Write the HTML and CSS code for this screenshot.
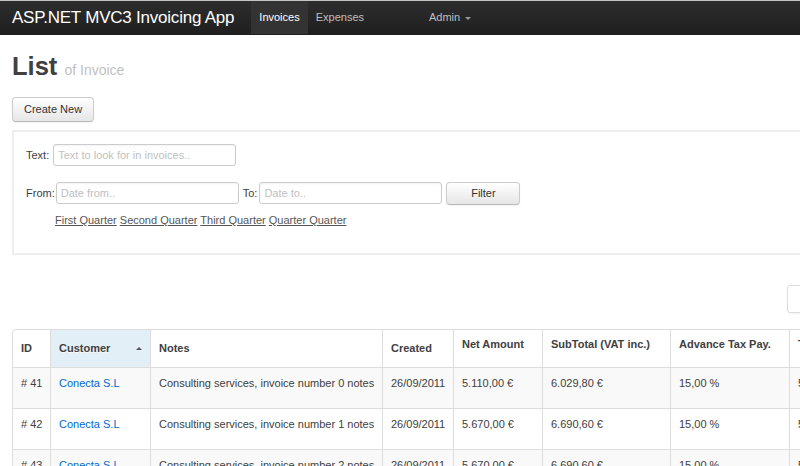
FILE: index.html
```html
<!DOCTYPE html>
<html lang="en">
<head>
<meta charset="utf-8">
<title>List of Invoice</title>
<link rel="stylesheet" href="styles.css">
</head>
<body>
<header class="topbar">
  <a class="brand" href="#">ASP.NET MVC3 Invoicing App</a>
  <ul class="nav">
    <li class="active"><a href="#">Invoices</a></li>
    <li><a href="#">Expenses</a></li>
  </ul>
  <ul class="nav secondary">
    <li><a href="#">Admin <span class="caret"></span></a></li>
  </ul>
</header>
<main class="container">
  <h1>List <small>of Invoice</small></h1>
  <div class="actions"><a class="btn" href="#">Create New</a></div>
  <form class="filter">
    <div class="field-row"><label class="lbl-text">Text:</label><input type="text" placeholder="Text to look for in invoices.."></div>
    <div class="field-row second"><label class="lbl-from">From:</label><input type="text" placeholder="Date from.."><label class="lbl-to">To:</label><input type="text" placeholder="Date to.."><button type="button" class="btn btn-filter">Filter</button></div>
    <div class="quarters"><a href="#">First Quarter</a> <a href="#">Second Quarter</a> <a href="#">Third Quarter</a> <a href="#">Quarter Quarter</a></div>
  </form>
  <div class="pager-row">
    <ul class="pagination">
      <li class="disabled"><a href="#">&larr; Previous</a></li>
      <li class="current"><a href="#">1</a></li>
      <li><a href="#">2</a></li>
      <li><a href="#">Next &rarr;</a></li>
    </ul>
  </div>
  <table class="grid">
    <colgroup>
      <col class="c-id"><col class="c-customer"><col class="c-notes"><col class="c-created"><col class="c-net"><col class="c-sub"><col class="c-adv"><col class="c-total">
    </colgroup>
    <thead>
      <tr>
        <th class="sortable">ID</th>
        <th class="sortable sorted">Customer</th>
        <th class="sortable">Notes</th>
        <th class="sortable">Created</th>
        <th>Net Amount</th>
        <th>SubTotal (VAT inc.)</th>
        <th>Advance Tax Pay.</th>
        <th>Total</th>
      </tr>
    </thead>
    <tbody>
      <tr>
        <td># 41</td><td><a href="#">Conecta S.L</a></td><td>Consulting services, invoice number 0 notes</td><td>26/09/2011</td><td>5.110,00 €</td><td>6.029,80 €</td><td>15,00 %</td><td>5.263,30 €</td>
      </tr>
      <tr>
        <td># 42</td><td><a href="#">Conecta S.L</a></td><td>Consulting services, invoice number 1 notes</td><td>26/09/2011</td><td>5.670,00 €</td><td>6.690,60 €</td><td>15,00 %</td><td>5.840,10 €</td>
      </tr>
      <tr>
        <td># 43</td><td><a href="#">Conecta S.L</a></td><td>Consulting services, invoice number 2 notes</td><td>26/09/2011</td><td>5.670,00 €</td><td>6.690,60 €</td><td>15,00 %</td><td>5.840,10 €</td>
      </tr>
    </tbody>
  </table>
</main>
</body>
</html>
```
FILE: styles.css
```css
* { box-sizing: border-box; }
html, body { margin: 0; padding: 0; overflow: hidden; }
body {
  width: 800px;
  height: 466px;
  font-family: "Liberation Sans", Arial, sans-serif;
  font-size: 11px;
  line-height: 15px;
  color: #404040;
  background: #fff;
}
a { color: #0069d6; text-decoration: none; }

/* top bar */
.topbar {
  display: flex;
  height: 35px;
  border-top: 1px solid #c4c4c4;
  background: linear-gradient(#2d2d2d, #1f1f1f);
  padding-left: 12px;
}
.brand {
  display: block;
  font-size: 17px;
  line-height: 33px;
  color: #fff;
  padding-right: 17px;
  letter-spacing: -0.22px;
}
.nav { display: flex; list-style: none; margin: 0; padding: 0; }
.nav a {
  display: block;
  padding: 0 8px;
  line-height: 33px;
  color: #bfbfbf;
}
.nav .active a { background: #333; color: #fff; }
.nav.secondary { margin-left: 49px; }
.caret {
  display: inline-block;
  width: 0; height: 0;
  border-left: 3px solid transparent;
  border-right: 3px solid transparent;
  border-top: 3px solid #9a9a9a;
  vertical-align: middle;
  margin-left: 2px;
}

/* content */
.container { width: 1000px; padding: 0 12px; }
h1 {
  margin: 16px 0 0;
  font-size: 25.5px;
  line-height: 30px;
  font-weight: bold;
  color: #404040;
}
h1 small { font-size: 14px; line-height: 1; font-weight: normal; color: #bfbfbf; }
.actions { display: flex; margin-top: 16px; }
.btn {
  display: inline-block;
  height: 25px;
  padding: 0 11px;
  line-height: 23px;
  border: 1px solid #ccc;
  border-bottom-color: #b8b8b8;
  border-radius: 4px;
  background: linear-gradient(#ffffff, #e6e6e6);
  color: #333;
  font-family: "Liberation Sans", Arial, sans-serif;
  font-size: 11px;
  box-shadow: inset 0 1px 0 rgba(255,255,255,.2), 0 1px 2px rgba(0,0,0,.05);
}

/* filter panel */
.filter {
  margin-top: 8px;
  width: 1000px;
  border: 2px solid #eee;
  padding: 12px 12px 25px;
}
.field-row { display: flex; align-items: flex-start; height: 22px; line-height: 22px; }
.field-row.second { margin-top: 16px; }
.lbl-text { margin-right: 4px; }
.lbl-from { margin-right: 1px; }
.lbl-to { margin-right: 2px; }
.filter input {
  width: 183px;
  height: 22px;
  margin: 0 4px 0 0;
  padding: 0 4px;
  border: 1px solid #ccc;
  border-radius: 3px;
  font-family: "Liberation Sans", Arial, sans-serif;
  font-size: 11px;
  color: #404040;
  box-shadow: inset 0 1px 2px rgba(0,0,0,.05);
}
.filter input::placeholder { color: #bfbfbf; }
.btn-filter {
  width: 74px;
  height: 23px;
  line-height: 21px;
  padding: 0;
}
.quarters { margin: 9px 0 0 29px; }
.quarters a { color: #555; text-decoration: underline; }

/* pager */
.pager-row { display: flex; margin-top: 30px; padding-left: 775px; }
.pagination {
  display: flex;
  list-style: none;
  margin: 0;
  padding: 0;
  height: 28px;
  border: 1px solid #ddd;
  border-radius: 3px;
  box-shadow: 0 1px 2px rgba(0,0,0,.05);
}
.pagination li + li { border-left: 1px solid #ddd; }
.pagination a { display: block; padding: 0 12px; line-height: 26px; }
.pagination .disabled a { color: #c9a57a; }
.pagination .current a { color: #999; background: #f5f5f5; }

/* table */
.grid {
  margin-top: 16px;
  border-collapse: separate;
  border-spacing: 0;
  border: 1px solid #ddd;
  border-radius: 4px;
  table-layout: fixed;
  width: 888px;
}
.c-id { width: 37px; }
.c-customer { width: 100px; }
.c-notes { width: 232px; }
.c-created { width: 71px; }
.c-net { width: 89px; }
.c-sub { width: 128px; }
.c-adv { width: 119px; }
.c-total { width: 110px; }
.grid th, .grid td {
  text-align: left;
  border-left: 1px solid #ddd;
  white-space: nowrap;
  overflow: hidden;
}
.grid th:first-child, .grid td:first-child { border-left: 0; }
.grid th {
  height: 37px;
  padding: 7px 8px 8px;
  font-weight: bold;
  vertical-align: top;
}
.grid th:first-child { border-top-left-radius: 4px; }
.grid th.sortable { vertical-align: middle; }
.grid th.sorted { background: #e3eff6; text-shadow: 0 1px 1px rgba(255,255,255,.75); }
.grid th.sorted::after {
  content: "";
  float: right;
  margin-top: 6px;
  border-style: solid;
  border-width: 0 3px 3px;
  border-color: transparent transparent #555;
}
.grid td {
  border-top: 1px solid #ddd;
  padding: 8px 8px 17px;
  vertical-align: top;
}
.grid tbody tr:nth-child(odd) td { background: #f9f9f9; }
```
